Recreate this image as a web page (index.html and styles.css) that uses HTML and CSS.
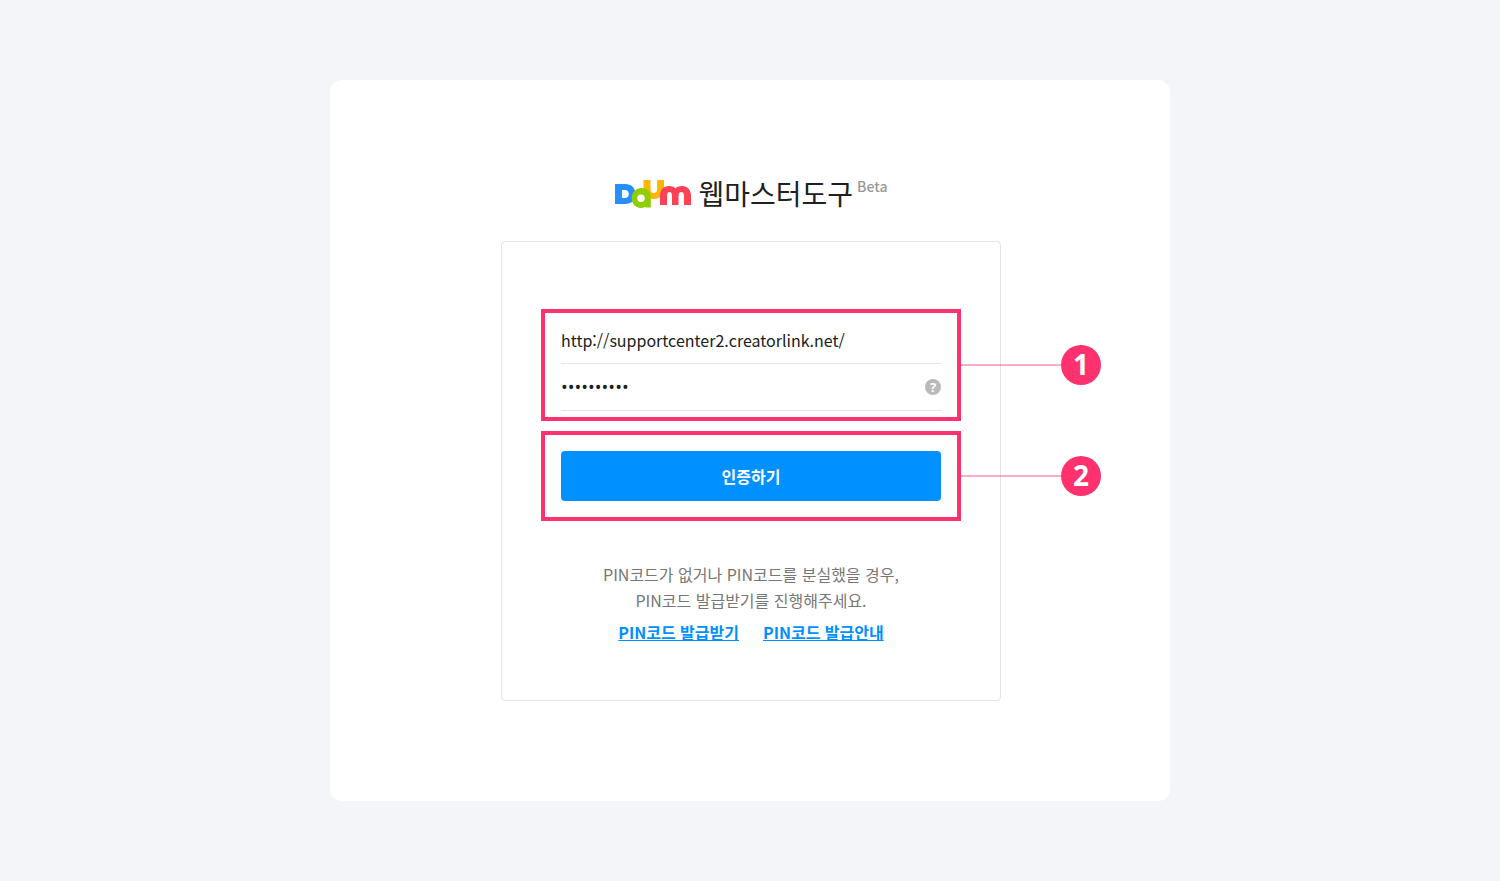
FILE: index.html
```html
<!DOCTYPE html>
<html lang="ko">
	<head>
		<meta charset="UTF-8" />
		<meta name="viewport" content="width=device-width, initial-scale=1" />
		<title>Daum 웹마스터도구</title>
		<link rel="stylesheet" href="styles.css">
	</head>
	<body>
		<main class="card">
			<h1 class="title">
				<svg class="logo" viewBox="0 0 76 28" role="img" aria-label="Daum">
					<path class="logo-u" d="M28.500 0h7v9c0 3 1.300 4 3.300 4s3.300-1 3.300-4V0h6.900v9c0 6-4 10-10.500 10S28.500 15 28.500 9z" />
					<path class="logo-d" fill-rule="evenodd" d="M0 4h10c6.500 0 10.500 4 10.500 10S16.500 24 10 24H0zM7 10v8h2.500c2.800 0 4.300-1.500 4.300-4s-1.500-4-4.300-4z" />
					<path class="logo-a" fill-rule="evenodd" d="M26.500 8c5.500 0 9.300 4 9.300 9.500V27.500h-5l-1-.8c-1 .8-2.300 1.300-4 1.300-5.300 0-9.100-4.300-9.100-10S21 8 26.500 8zM26 14.500a3.800 3.800 0 1 0 0 7.600 3.800 3.800 0 0 0 0-7.600z" />
					<path class="logo-m" d="M45 25V16c0-6 3.500-10 9-10 2.600 0 4.700.8 6.300 2.400C62 6.800 64.200 6 67 6c5.500 0 9 4 9 10v9h-7v-9c0-2.500-1-4-2.800-4S63.500 13.500 63.500 16v9h-6.500v-9c0-2.500-.8-4-2.500-4S52 13.500 52 16v9z" />
				</svg>
				<span class="name">웹마스터도구</span>
				<small class="beta">Beta</small>
			</h1>
			<form class="login">
				<div class="mark">
					<div class="field">
						<input type="text" aria-label="사이트 URL" value="http://supportcenter2.creatorlink.net/" />
					</div>
					<div class="field">
						<input type="password" aria-label="PIN코드" value="1234567890" autocomplete="off" />
						<button class="help" type="button" aria-label="도움말">?</button>
					</div>
					<span class="step">1</span>
				</div>
				<div class="mark mark-submit">
					<button class="submit" type="button">인증하기</button>
					<span class="step">2</span>
				</div>
				<p class="guide">PIN코드가 없거나 PIN코드를 분실했을 경우,<br />PIN코드 발급받기를 진행해주세요.</p>
				<div class="links">
					<a href="#issue">PIN코드 발급받기</a>
					<a href="#guide">PIN코드 발급안내</a>
				</div>
			</form>
		</main>
	</body>
</html>
```
FILE: styles.css
```css
* {
	box-sizing: border-box;
}
body {
	margin: 0;
	padding: 80px 20px;
	background: #f4f5f9;
	font-family: "Noto Sans CJK KR", sans-serif;
	font-size: 16px;
	line-height: 26px;
	color: #202020;
}
input, button {
	font: inherit;
	color: inherit;
	border: 0;
	padding: 0;
}
.card {
	max-width: 840px;
	margin: 0 auto;
	padding: 96px 0 100px 2px;
	border-radius: 12px;
	background: #fff;
}
.title {
	display: flex;
	justify-content: center;
	align-items: center;
	height: 36px;
	margin: 0 0 29px;
	font-weight: normal;
}
.logo {
	width: 76px;
	height: 28px;
	margin-right: 8px;
}
.logo-d {
	fill: #258fff;
}
.logo-a {
	fill: #8fce00;
}
.logo-u {
	fill: #ffb400;
}
.logo-m {
	fill: #ff4155;
}
.name {
	padding-bottom: 2px;
	font-size: 28px;
	line-height: 36px;
}
.beta {
	align-self: flex-start;
	margin-left: 4px;
	font-size: 14px;
	font-weight: 500;
	line-height: 20px;
	color: #999;
}
.login {
	max-width: 500px;
	margin: 0 auto;
	padding: 67px 39px 55px;
	border: 1px solid #e4e4e4;
	border-radius: 4px;
}

/* highlighted area with its step number */
.mark {
	position: relative;
	padding: 4px 16px 6px;
	border: 4px solid #ff326f;
}
.mark::after {
	content: "";
	position: absolute;
	top: 50%;
	left: 100%;
	width: 104px;
	height: 2px;
	margin-top: -1px;
	background: #ff326f;
	opacity: .4;
}
.mark-submit {
	margin-top: 10px;
	padding: 16px;
}
.step {
	position: absolute;
	z-index: 1;
	top: 50%;
	left: 100%;
	width: 40px;
	height: 40px;
	margin: -20px 0 0 104px;
	border-radius: 50%;
	background: #ff326f;
	color: #fff;
	font-family: "Noto Sans", sans-serif;
	font-size: 28px;
	font-weight: bold;
	line-height: 38px;
	text-align: center;
}

.field {
	display: flex;
	align-items: center;
	height: 47px;
	border-bottom: 1px solid #e4e4e4;
}
.field input {
	flex: 1;
	min-width: 0;
	height: 46px;
	background: none;
}
.field input[type="password"] {
	font-family: "Open Sans", sans-serif;
	font-size: 18px;
}
.help {
	width: 16px;
	height: 16px;
	border-radius: 50%;
	background: #bababa;
	color: #fff;
	font-family: "Open Sans", sans-serif;
	font-size: 13px;
	font-weight: bold;
	line-height: 16px;
}
.submit {
	display: block;
	width: 100%;
	height: 50px;
	border-radius: 4px;
	background: #0090ff;
	color: #fff;
	font-weight: bold;
}
.guide {
	margin: 40px 0 6px;
	color: #777;
	text-align: center;
}
.links {
	display: flex;
	justify-content: center;
	gap: 24px;
}
.links a {
	color: #0090ff;
	font-weight: bold;
}
```
